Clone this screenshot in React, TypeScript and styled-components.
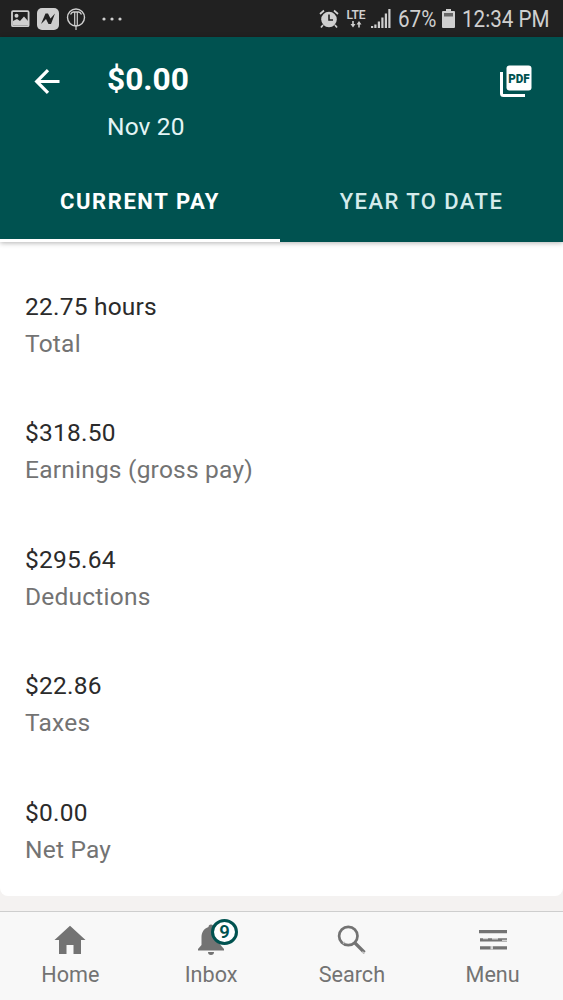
import React from 'react';
import styled, { createGlobalStyle } from 'styled-components';

const Global = createGlobalStyle`
  * { box-sizing: border-box; }
  body { margin: 0; background: #f4f2f1; font-family: Roboto, sans-serif; }
`;
const Screen = styled.div`
  width: 563px; height: 1000px; display: flex; flex-direction: column;
  background: #f4f2f1; overflow: hidden;
`;
const StatusBar = styled.div`
  height: 37px; flex: none; background: #212121; color: #cfcfcf;
  display: flex; align-items: center; justify-content: space-between;
  padding: 0 13px 0 10px;
  svg { display: block; }
`;
const StatusGroup = styled.div`
  display: flex; align-items: center; gap: 7px; height: 37px;
`;
const MoreIcons = styled.div`margin-left: 9px;`;
const StatusText = styled.span<{ $width: number }>`
  width: ${p => p.$width}px; font-size: 24px; line-height: 37px;
  padding-top: 2px; white-space: nowrap;
  span { display: inline-block; transform-origin: 0 50%; transform: scaleX(0.86); }
`;
const Network = styled.div`
  width: 20px; display: flex; flex-direction: column; align-items: center;
  margin-right: -2px; font-size: 12px; font-weight: 600; line-height: 11px;
`;
const Header = styled.header`
  height: 205px; flex: none; background: #005250; color: #fff;
  box-shadow: 0 1px 5px rgba(0,0,0,.3); position: relative; z-index: 1;
  display: flex; flex-direction: column;
`;
const TitleRow = styled.div`
  height: 123px; display: flex; align-items: flex-start; padding: 0 31px 0 29px;
  svg { display: block; }
`;
const BackButton = styled.div`width: 36px; margin-top: 26px;`;
const Titles = styled.div`flex: 1; padding: 24px 0 0 42px;`;
const Amount = styled.div`font-size: 31.7px; font-weight: 700; line-height: 38px;`;
const PayDate = styled.div`
  margin-top: 10px; font-size: 24.5px; letter-spacing: 0.15px; line-height: 36px; color: #e3f5f5;
`;
const PdfButton = styled.div`margin-top: 28px;`;
const Tabs = styled.div`height: 82px; display: flex;`;
const Tab = styled.div<{ $active?: boolean }>`
  width: ${p => (p.$active ? 280 : 283)}px; height: 82px; text-align: center;
  font-size: 22px; line-height: 83px; letter-spacing: ${p => (p.$active ? 1.6 : 1.45)}px;
  font-weight: ${p => (p.$active ? 700 : 500)}; color: ${p => (p.$active ? '#fff' : '#d5ebeb')};
  border-bottom: ${p => (p.$active ? '3px solid #fff' : 'none')};
`;
const Card = styled.main`
  height: 654px; flex: none; background: #fff; border-radius: 0 0 8px 8px;
  padding: 45.600px 25px 0;
`;
const Entry = styled.div`height: 126.6px;`;
const Value = styled.div`
  font-size: 24.5px; letter-spacing: 0.22px; line-height: 37px; color: #2b2b2b;
`;
const Label = styled(Value)`color: #737373;`;
const NavBar = styled.nav`
  height: 89px; margin-top: 15px; flex: none; border-top: 1px solid #cecece;
  background: #f8f8f8; display: flex;
`;
const NavItem = styled.div`
  flex: 1; display: flex; flex-direction: column; align-items: center; padding-top: 11px;
  color: #737373; font-size: 21.6px; line-height: 30px;
  svg { display: block; }
`;
const IconBox = styled.div`height: 36px; width: 36px; position: relative; margin-bottom: 1px;`;
const Badge = styled.span`
  position: absolute; left: 18px; top: -4px; width: 27px; height: 26px; border-radius: 50%;
  border: 3px solid #005250; background: #fff; color: #005250;
  font-size: 18.500px; font-weight: 600; line-height: 21px; text-align: center;
`;

const entries = [
  ['22.75 hours', 'Total'],
  ['$318.50', 'Earnings (gross pay)'],
  ['$295.64', 'Deductions'],
  ['$22.86', 'Taxes'],
  ['$0.00', 'Net Pay'],
];

const PictureIcon = () => (
  <svg width="20" height="18" viewBox="0 0 20 18">
    <rect x="2" y="1.2" width="16.6" height="15" rx="1" fill="none" stroke="#cfcfcf" strokeWidth="1.8" />
    <circle cx="6.500" cy="5.8" r="2" fill="#cfcfcf" />
    <path d="M3 15V11l4-2 3 2 4-4.500 4 4.500v4z" fill="#cfcfcf" />
  </svg>
);
const NewsIcon = () => (
  <svg width="22" height="22" viewBox="0 0 22 22">
    <rect width="22" height="22" rx="5" fill="#cfcfcf" />
    <path d="M4 16L8.5 5.500h2.500l2.500 5L18 5.500 14 16h-2.500L9 11z" fill="#212121" />
  </svg>
);
const TimesIcon = () => (
  <svg width="20" height="22" viewBox="0 0 20 22" fill="none" stroke="#cfcfcf" strokeWidth="1.400">
    <circle cx="10" cy="9.500" r="8.500" />
    <path d="M4.500 6.500Q6 3.500 8 4h4Q14 3.500 15.500 6.500" />
    <path d="M8.700 4v14M11.300 4v14M10 17v5" strokeWidth="1.200" />
  </svg>
);
const DotsIcon = () => (
  <svg width="20" height="4" viewBox="0 0 20 4" fill="#cfcfcf">
    <circle cx="2" cy="2" r="1.6" /><circle cx="10" cy="2" r="1.6" /><circle cx="18" cy="2" r="1.6" />
  </svg>
);
const AlarmIcon = () => (
  <svg width="20" height="20" viewBox="0 0 20 20">
    <circle cx="10" cy="10.500" r="7.800" fill="#cfcfcf" />
    <path d="M1 5l4-3.500M19 5l-4-3.500M4 16l-2 2.500M16 16l2 2.500" stroke="#cfcfcf" strokeWidth="1.700" />
    <path d="M10 5.500V11h4" stroke="#212121" strokeWidth="1.600" fill="none" />
  </svg>
);
const ArrowsIcon = () => (
  <svg width="12" height="7" viewBox="0 0 12 7" fill="#cfcfcf">
    <path d="M2.200 0h1.600v3h1.700L3 6.500.5 3h1.700zM8.200 6.500h1.600v-3h1.700L9 0 6.500 3.500h1.700z" />
  </svg>
);
const SignalIcon = () => (
  <svg width="20" height="19" viewBox="0 0 20 19" fill="#cfcfcf">
    <path d="M0 17h2.200v2H0zM3.300 15.500h2.200V19H3.300zM6.800 12.500h2.200V19H6.800zM10.300 8.500h2.200V19h-2.200zM13.800 4.500H16V19h-2.200zM17.300 0h2.200v19h-2.200z" />
  </svg>
);
const BatteryIcon = () => (
  <svg width="13" height="19" viewBox="0 0 13 19">
    <path d="M4 0h5v2h3a1 1 0 0 1 1 1v15a1 1 0 0 1-1 1H1a1 1 0 0 1-1-1V3a1 1 0 0 1 1-1h3z" fill="#cfcfcf" />
    <path d="M2 4h9v3.500H2z" fill="#666" />
  </svg>
);
const BackIcon = () => (
  <svg width="36" height="36" viewBox="0 0 36 36" fill="none" stroke="#fff" strokeWidth="3.200">
    <path d="M30.500 18.500H8M19 7.200L7.700 18.500 19 29.800" />
  </svg>
);
const PdfIcon = () => (
  <svg width="33" height="33" viewBox="0 0 33 33">
    <path d="M2.500 7v21.500a2 2 0 0 0 2 2H26" fill="none" stroke="#fff" strokeWidth="3" />
    <rect x="7.500" y="0.500" width="25" height="25" rx="3" fill="#fff" />
    <text x="20" y="17.500" textAnchor="middle" textLength="21.500" lengthAdjust="spacingAndGlyphs" fontFamily="Roboto" fontWeight="900" fontSize="13.500" fill="#005250">PDF</text>
  </svg>
);
const HomeIcon = () => (
  <svg width="36" height="36" viewBox="0 0 36 36" fill="#737373">
    <path d="M18 2.700L2.500 17H7v14h7.500v-9h7v9H29V17h4.500z" />
  </svg>
);
const BellIcon = () => (
  <svg width="36" height="36" viewBox="0 0 36 36" fill="#737373">
    <path d="M18 1.500a2.500 2.500 0 0 0-2.500 2.500C11 5.500 8.500 9 8.500 14.500v7.500L5 26v1.500h26V26l-3.500-4V14.500c0-5.500-2.500-9-7-10.500A2.500 2.500 0 0 0 18 1.500zM15 29a3 3 0 0 0 6 0z" />
  </svg>
);
const SearchIcon = () => (
  <svg width="36" height="36" viewBox="0 0 36 36" fill="none" stroke="#737373" strokeWidth="2.700">
    <circle cx="14.300" cy="13" r="9.200" /><path d="M20.500 19.500l10 10" strokeWidth="3.200" />
    <path d="M9 20.500l2-1.500M28 29l3 1" stroke="#c5c5c5" strokeWidth="1.500" />
  </svg>
);
const MenuIcon = () => (
  <svg width="36" height="36" viewBox="0 0 36 36">
    <path d="M4 7h28v3.200H4zM5 15.200h27v3.200H5zM5 23.200h27v3.200H5z" fill="#737373" />
    <path d="M8 15h5v1.200H8zM17 15h6v1.600h-6zM27 16.800h5V18h-5zM15.500 23h2.500v3.400h-2.500z" fill="#d4d4d4" />
  </svg>
);

export default function App() {
  return (
    <Screen>
      <Global />
      <StatusBar>
        <StatusGroup>
          <PictureIcon /><NewsIcon /><TimesIcon />
          <MoreIcons><DotsIcon /></MoreIcons>
        </StatusGroup>
        <StatusGroup>
          <AlarmIcon />
          <Network>LTE<ArrowsIcon /></Network>
          <SignalIcon />
          <StatusText $width={37}><span>67%</span></StatusText>
          <BatteryIcon />
          <StatusText $width={88}><span>12:34 PM</span></StatusText>
        </StatusGroup>
      </StatusBar>
      <Header>
        <TitleRow>
          <BackButton><BackIcon /></BackButton>
          <Titles><Amount>$0.00</Amount><PayDate>Nov 20</PayDate></Titles>
          <PdfButton><PdfIcon /></PdfButton>
        </TitleRow>
        <Tabs><Tab $active>CURRENT PAY</Tab><Tab>YEAR TO DATE</Tab></Tabs>
      </Header>
      <Card>
        {entries.map(([value, label]) => (
          <Entry key={label}><Value>{value}</Value><Label>{label}</Label></Entry>
        ))}
      </Card>
      <NavBar>
        <NavItem><IconBox><HomeIcon /></IconBox>Home</NavItem>
        <NavItem><IconBox><BellIcon /><Badge>9</Badge></IconBox>Inbox</NavItem>
        <NavItem><IconBox><SearchIcon /></IconBox>Search</NavItem>
        <NavItem><IconBox><MenuIcon /></IconBox>Menu</NavItem>
      </NavBar>
    </Screen>
  );
}
